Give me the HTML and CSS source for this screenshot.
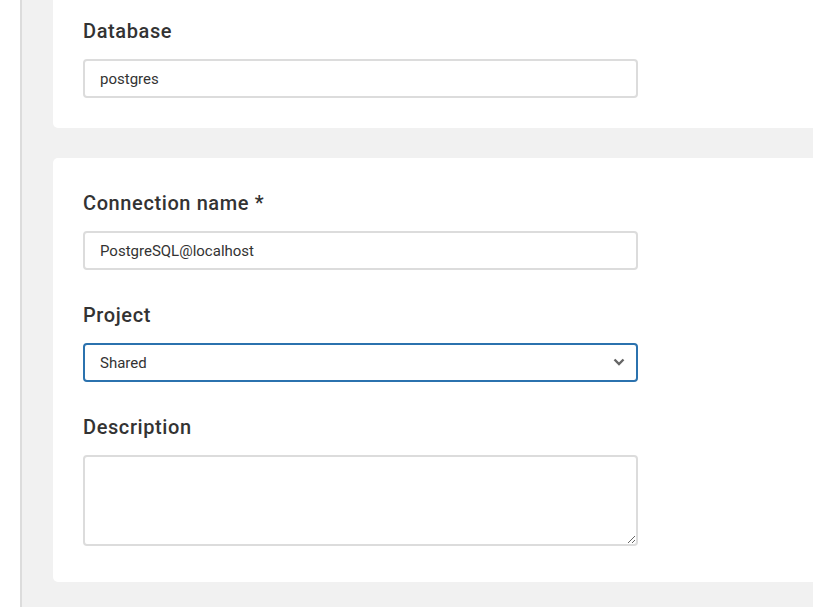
FILE: index.html
```html
<!DOCTYPE html>
<html>
<head>
<meta charset="utf-8">
<link rel="stylesheet" href="styles.css">
</head>
<body>
<div class="page">
  <div class="side"></div>
  <main class="main">
    <section class="card card-first">
      <label class="label">Database</label>
      <input class="field" type="text" value="postgres">
    </section>
    <section class="card card-second">
      <label class="label">Connection name *</label>
      <input class="field" type="text" value="PostgreSQL@localhost">
      <label class="label label-gap">Project</label>
      <div class="select-wrap">
        <select class="field select">
          <option>Shared</option>
        </select>
        <svg class="chevron" width="12" height="8" viewBox="0 0 12 8"><path d="M1.5 1.5 L6 6 L10.5 1.5" fill="none" stroke="#666" stroke-width="2.4"/></svg>
      </div>
      <label class="label label-gap">Description</label>
      <textarea class="field area"></textarea>
    </section>
  </main>
</div>
</body>
</html>
```

FILE: styles.css
```css
html, body {
  margin: 0;
  padding: 0;
  height: 100%;
}
body {
  font-family: Roboto, "Noto Sans", sans-serif;
  color: #333;
  background: #fff;
}
.page {
  display: flex;
  height: 607px;
  overflow: hidden;
}
.side {
  width: 20px;
  flex: none;
  background: #fff;
  border-right: 2px solid #dcdcdc;
}
.main {
  flex: 1;
  background: #f1f1f1;
  padding-left: 31px;
  display: flex;
  flex-direction: column;
  gap: 30px;
}
.card {
  background: #fff;
  border-radius: 5px 0 0 5px;
  padding: 0 0 30px 30px;
  display: flex;
  flex-direction: column;
  align-items: flex-start;
}
.card-first {
  border-top-left-radius: 0;
  padding-top: 19px;
  height: 128px;
  box-sizing: border-box;
}
.card-second {
  padding-top: 33px;
  padding-bottom: 36px;
}
.label {
  font-size: 20px;
  font-weight: 500;
  line-height: 24px;
  letter-spacing: 0.6px;
  color: #333;
  margin-bottom: 16px;
}
.label-gap {
  margin-top: 33px;
}
.field {
  box-sizing: border-box;
  width: 555px;
  height: 39px;
  border: 2px solid #dcdcdc;
  border-radius: 4px;
  padding: 0 15px;
  font-family: Roboto, "Noto Sans", sans-serif;
  font-size: 15px;
  color: #333;
  background: #fff;
  outline: none;
  margin: 0;
}
.select-wrap {
  position: relative;
  width: 555px;
  height: 39px;
}
.select {
  appearance: none;
  -webkit-appearance: none;
  border-color: #2b72ae;
}
.chevron {
  position: absolute;
  right: 13px;
  top: 15px;
}
.area {
  display: block;
  height: 91px;
  resize: both;
  padding: 10px 15px;
}
```
